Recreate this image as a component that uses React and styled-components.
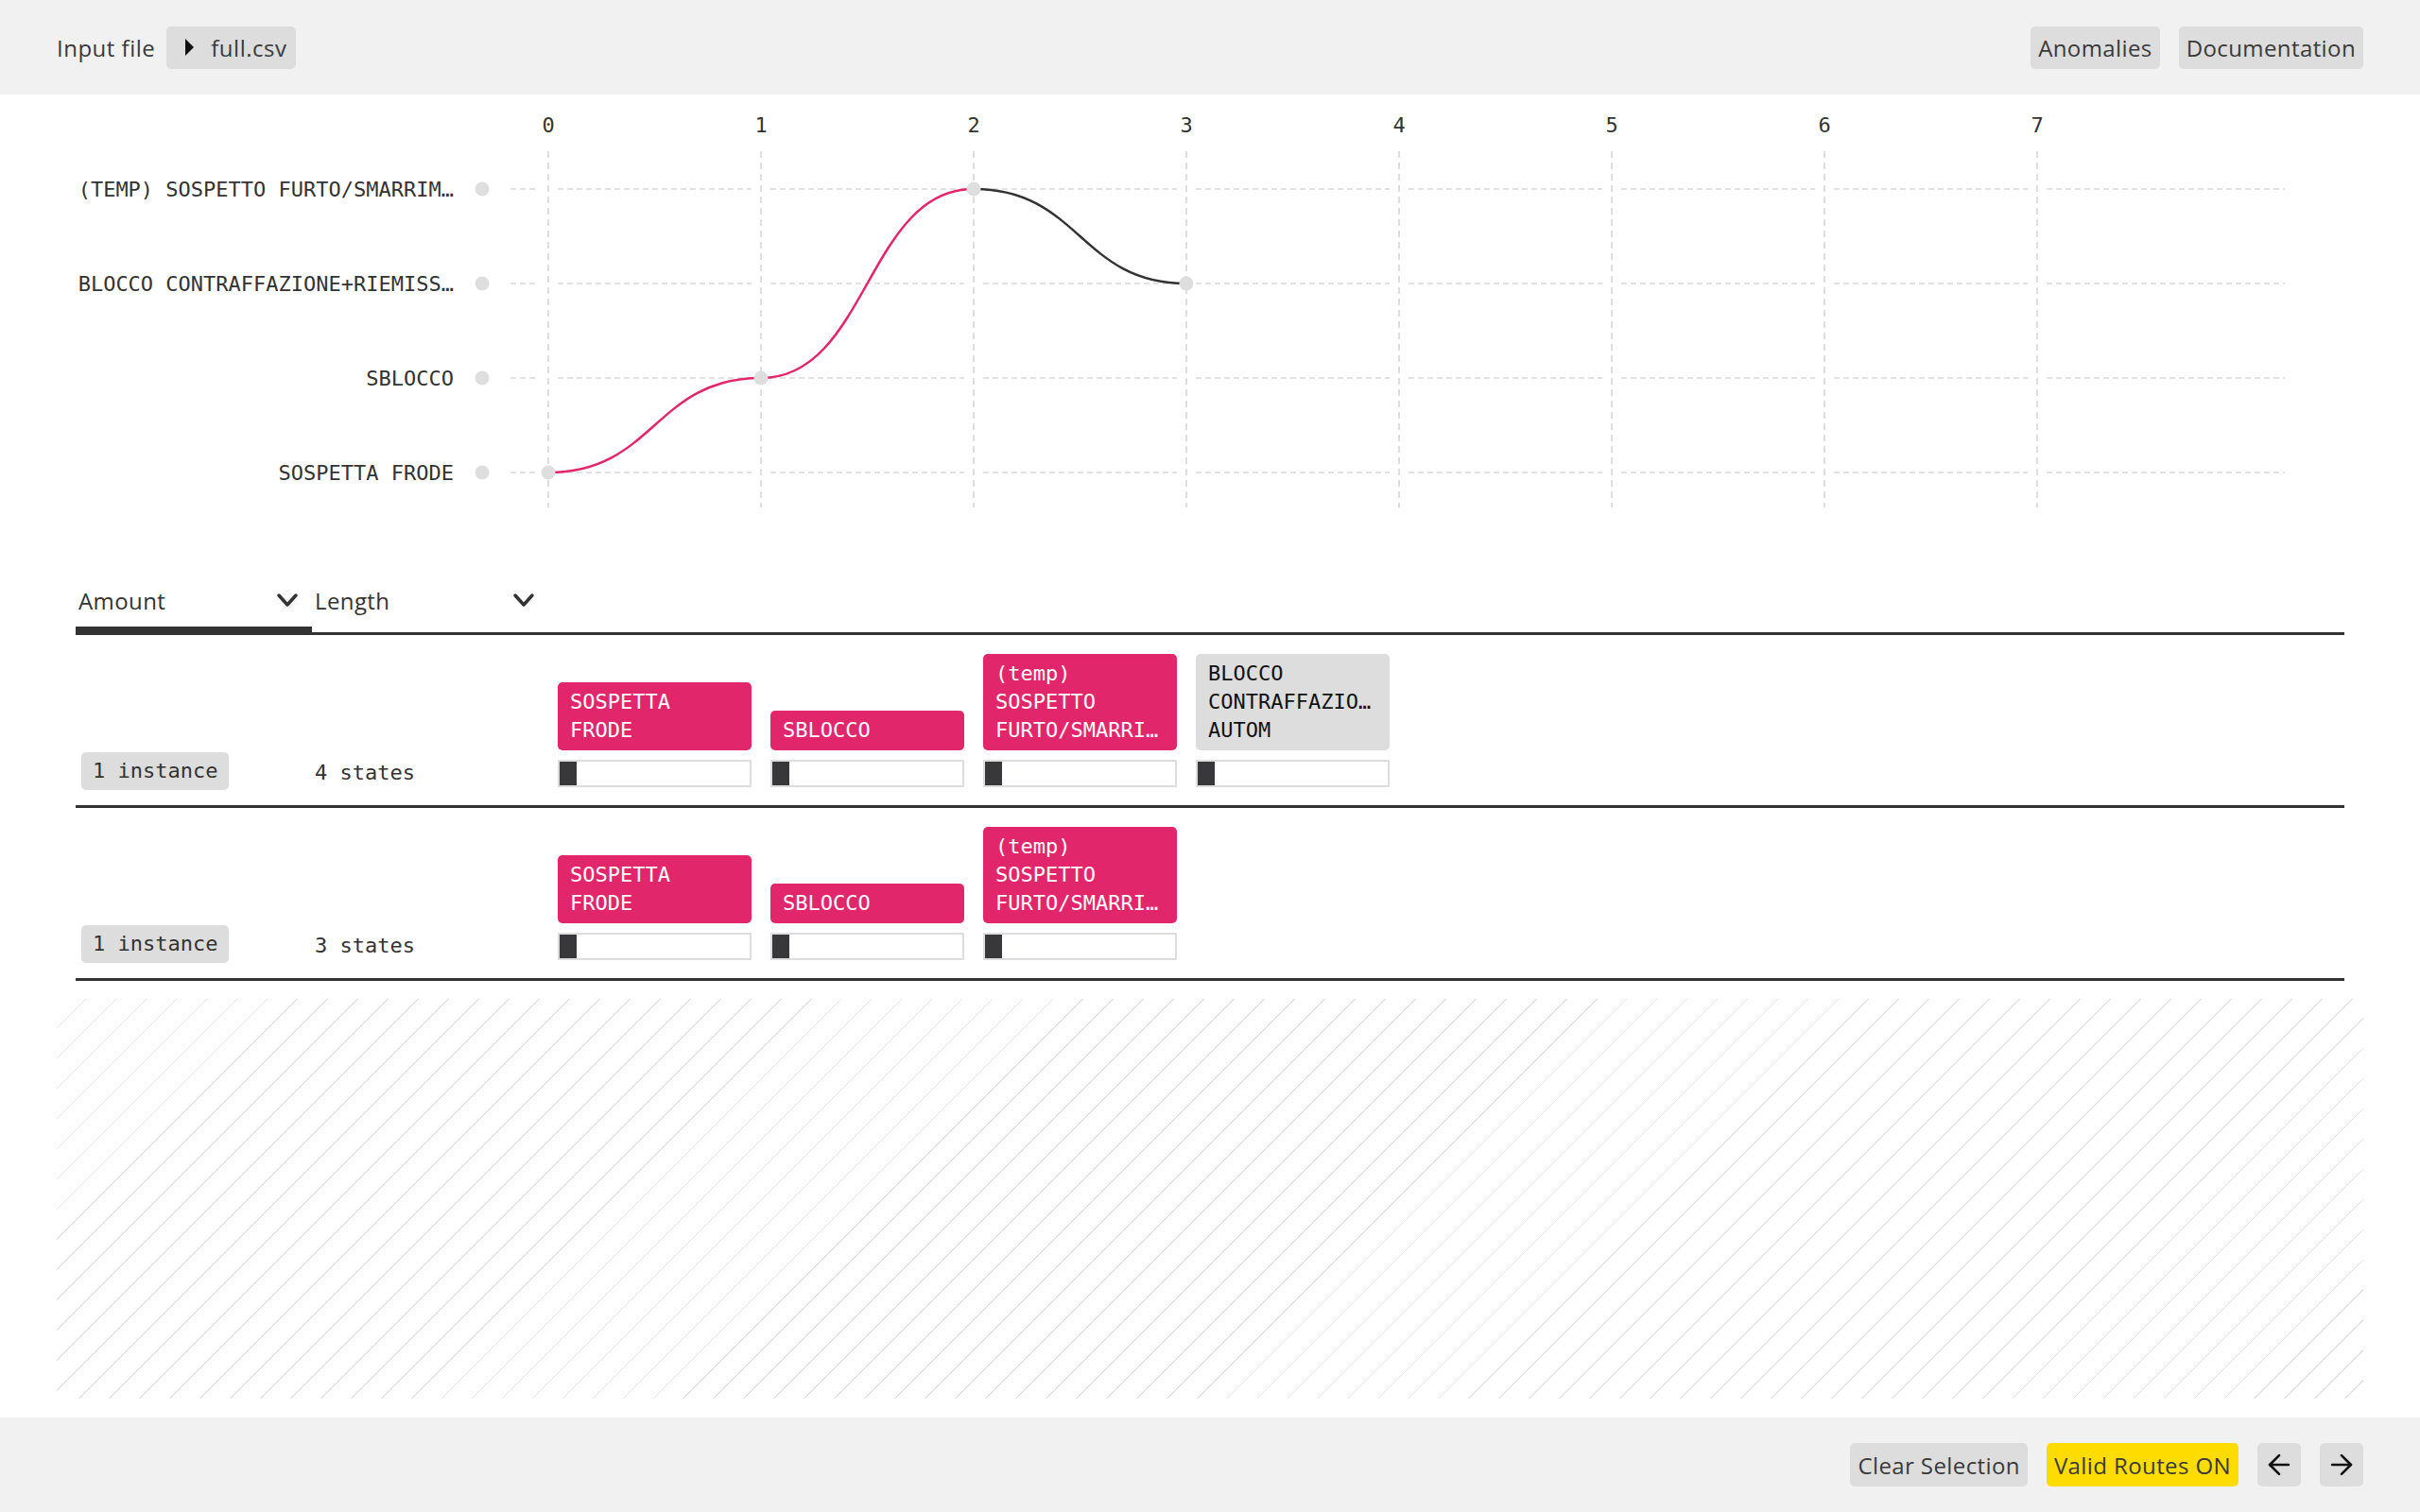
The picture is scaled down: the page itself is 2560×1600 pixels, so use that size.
import React from "react";
import styled, { createGlobalStyle } from "styled-components";
import { ArrowLeft, ArrowRight } from "lucide-react";

const MONO = `"DejaVu Sans Mono", "Liberation Mono", monospace`;
const PINK = "#e2266b";

const GlobalStyle = createGlobalStyle`
  html, body {
    margin: 0;
    padding: 0;
  }
  body {
    font-family: "Open Sans", "Liberation Sans", sans-serif;
    color: #333;
    background: #fff;
  }
  * {
    box-sizing: border-box;
  }
`;

const states = [
  "(TEMP) SOSPETTO FURTO/SMARRIM…",
  "BLOCCO CONTRAFFAZIONE+RIEMISS…",
  "SBLOCCO",
  "SOSPETTA FRODE",
];

// path of the selected route: [column, row]
const route = [
  [0, 3],
  [1, 2],
  [2, 0],
  [3, 1],
];
const selectedUpTo = 2;

const rows = [
  {
    instances: 1,
    steps: [
      { lines: ["SOSPETTA", "FRODE"], on: true },
      { lines: ["SBLOCCO"], on: true },
      { lines: ["(temp)", "SOSPETTO", "FURTO/SMARRI…"], on: true },
      { lines: ["BLOCCO", "CONTRAFFAZIO…", "AUTOM"], on: false },
    ],
  },
  {
    instances: 1,
    steps: [
      { lines: ["SOSPETTA", "FRODE"], on: true },
      { lines: ["SBLOCCO"], on: true },
      { lines: ["(temp)", "SOSPETTO", "FURTO/SMARRI…"], on: true },
    ],
  },
];

const colX = (i) => 580 + 225 * i;
const rowY = (i) => 100 + 100 * i;

function Chart() {
  const cols = [0, 1, 2, 3, 4, 5, 6, 7];
  const edges = [540, ...cols.flatMap((c) => [colX(c) - 10, colX(c) + 10]), 2417];
  const segments = [];
  for (let i = 0; i < edges.length; i += 2) segments.push([edges[i], edges[i + 1]]);

  const curve = (a, b) => {
    const [x0, y0] = [colX(a[0]), rowY(a[1])];
    const [x1, y1] = [colX(b[0]), rowY(b[1])];
    const k = (x1 - x0) / 2;
    return `M${x0} ${y0} C${x0 + k} ${y0}, ${x1 - k} ${y1}, ${x1} ${y1}`;
  };

  return (
    <ChartSvg viewBox="0 0 2560 480" width="2560" height="480">
      {cols.map((c) => (
        <g key={c}>
          <AxisText x={colX(c)} y={32} textAnchor="middle">
            {c}
          </AxisText>
          <line
            x1={colX(c)}
            x2={colX(c)}
            y1={60}
            y2={437}
            stroke="#dedede"
            strokeWidth="2"
            strokeDasharray="7 5"
          />
        </g>
      ))}
      {states.map((s, r) => (
        <g key={s}>
          <AxisText x={480} y={rowY(r)} textAnchor="end">
            {s}
          </AxisText>
          <circle cx={510} cy={rowY(r)} r={7.5} fill="#dedede" />
          {segments.map(([a, b]) => (
            <line
              key={a}
              x1={a}
              x2={b}
              y1={rowY(r)}
              y2={rowY(r)}
              stroke="#e2e2e2"
              strokeWidth="2"
              strokeDasharray="6 4"
            />
          ))}
        </g>
      ))}
      {route.slice(1).map((p, i) => (
        <path
          key={i}
          d={curve(route[i], p)}
          fill="none"
          stroke={i < selectedUpTo ? PINK : "#333"}
          strokeWidth="2.5"
        />
      ))}
      {route.map(([c, r]) => (
        <circle key={c} cx={colX(c)} cy={rowY(r)} r={7.5} fill="#dedede" />
      ))}
    </ChartSvg>
  );
}

function Chevron() {
  return (
    <svg width="24" height="16" viewBox="0 0 24 16">
      <polyline
        points="3,3 12,13 21,3"
        fill="none"
        stroke="#333"
        strokeWidth="3.5"
        strokeLinecap="round"
        strokeLinejoin="round"
      />
    </svg>
  );
}

export default function App() {
  return (
    <Page>
      <GlobalStyle />
      <Header>
        <FileGroup>
          <span>Input file</span>
          <FileButton>
            <svg width="10" height="18" viewBox="0 0 10 18">
              <polygon points="0,0 9,9 0,18" fill="#111" />
            </svg>
            full.csv
          </FileButton>
        </FileGroup>
        <ButtonGroup>
          <GreyButton>Anomalies</GreyButton>
          <GreyButton>Documentation</GreyButton>
        </ButtonGroup>
      </Header>

      <Main>
        <Chart />
        <Content>
          <TabBar>
            <Tab $active>
              Amount
              <Chevron />
            </Tab>
            <Tab>
              Length
              <Chevron />
            </Tab>
          </TabBar>
          {rows.map((row, i) => (
            <Row key={i}>
              <InstanceCell>
                <Badge>{row.instances} instance</Badge>
              </InstanceCell>
              <StatesCell>{row.steps.length} states</StatesCell>
              <Steps>
                {row.steps.map((step, j) => (
                  <Step key={j}>
                    <Tag $on={step.on}>
                      {step.lines.map((l) => (
                        <TagLine key={l}>{l}</TagLine>
                      ))}
                    </Tag>
                    <Bar>
                      <Fill />
                    </Bar>
                  </Step>
                ))}
              </Steps>
            </Row>
          ))}
        </Content>
        <Hatch />
      </Main>

      <Footer>
        <GreyButton $tall>Clear Selection</GreyButton>
        <GreyButton $tall $yellow>
          Valid Routes ON
        </GreyButton>
        <IconButton>
          <ArrowLeft size={34} strokeWidth={1.9} color="#111" />
        </IconButton>
        <IconButton>
          <ArrowRight size={34} strokeWidth={1.9} color="#111" />
        </IconButton>
      </Footer>
    </Page>
  );
}

const Page = styled.div`
  width: 2560px;
  height: 1600px;
  display: flex;
  flex-direction: column;
  overflow: hidden;
`;

const Header = styled.header`
  height: 100px;
  flex: none;
  background: #f1f1f1;
  padding: 0 60px;
  display: flex;
  align-items: center;
  justify-content: space-between;
  font-size: 24px;
  letter-spacing: 0.5px;
`;

const FileGroup = styled.div`
  display: flex;
  align-items: center;
  gap: 12px;
  color: #3a3a3a;
`;

const FileButton = styled.div`
  height: 45px;
  display: flex;
  align-items: center;
  gap: 17px;
  padding: 0 10px 0 20px;
  background: #dddddd;
  border-radius: 5px;
  color: #3a3a3a;
`;

const ButtonGroup = styled.div`
  display: flex;
  gap: 20px;
`;

const GreyButton = styled.div`
  height: ${(p) => (p.$tall ? "46px" : "45px")};
  display: flex;
  align-items: center;
  padding: 0 8px;
  background: ${(p) => (p.$yellow ? "#ffdc00" : "#dddddd")};
  border-radius: 5px;
  font-size: 24px;
  letter-spacing: 0.4px;
  color: #3a3a3a;
`;

const IconButton = styled.div`
  width: 46px;
  height: 46px;
  display: flex;
  align-items: center;
  justify-content: center;
  background: #dddddd;
  border-radius: 5px;
`;

const Main = styled.main`
  flex: 1;
  display: flex;
  flex-direction: column;
  min-height: 0;
`;

const ChartSvg = styled.svg`
  display: block;
  flex: none;
`;

const AxisText = styled.text`
  font-family: ${MONO};
  font-size: 22px;
  fill: #333;
  dominant-baseline: central;
`;

const Content = styled.div`
  padding: 0 80px;
`;

const TabBar = styled.div`
  margin-top: 32px;
  display: flex;
  border-bottom: 3px solid #333;
`;

const Tab = styled.div`
  width: 250px;
  height: 57px;
  padding: 0 14px 5px 3px;
  display: flex;
  align-items: center;
  justify-content: space-between;
  font-size: 24px;
  letter-spacing: 0.4px;
  color: #333;
  border-bottom: 6px solid ${(p) => (p.$active ? "#333" : "transparent")};
`;

const Row = styled.div`
  display: flex;
  align-items: flex-end;
  padding: 20px 0 19px;
  border-bottom: 3px solid #333;
`;

const InstanceCell = styled.div`
  width: 250px;
  flex: none;
  padding-left: 6px;
  margin-bottom: -3px;
`;

const Badge = styled.span`
  display: inline-block;
  height: 40px;
  line-height: 40px;
  padding: 0 12px;
  background: #dddddd;
  border-radius: 5px;
  font-family: ${MONO};
  font-size: 22px;
  color: #333;
`;

const StatesCell = styled.div`
  width: 250px;
  flex: none;
  padding-left: 3px;
  line-height: 30px;
  font-family: ${MONO};
  font-size: 22px;
  color: #333;
`;

const Steps = styled.div`
  display: flex;
  align-items: flex-end;
  gap: 20px;
  padding-left: 10px;
`;

const Step = styled.div`
  width: 205px;
  display: flex;
  flex-direction: column;
`;

const Tag = styled.div`
  padding: 6px 13px;
  border-radius: 5px;
  background: ${(p) => (p.$on ? PINK : "#dddddd")};
  color: ${(p) => (p.$on ? "#fff" : "#111")};
  font-family: ${MONO};
  font-size: 22px;
  line-height: 30px;
`;

const TagLine = styled.div`
  white-space: nowrap;
  overflow: hidden;
`;

const Bar = styled.div`
  margin-top: 10px;
  height: 29px;
  border: 2px solid #dddddd;
  background: #fff;
`;

const Fill = styled.div`
  width: 18px;
  height: 100%;
  background: #38383a;
`;

const Hatch = styled.div`
  flex: 1;
  margin: 19px 60px 20px;
  background: repeating-linear-gradient(
    135deg,
    transparent 0,
    transparent 21.4px,
    #e3e3e3 21.4px,
    #e3e3e3 22.6px
  );
`;

const Footer = styled.footer`
  height: 100px;
  flex: none;
  background: #f1f1f1;
  padding: 0 60px;
  display: flex;
  align-items: center;
  justify-content: flex-end;
  gap: 20px;
`;
